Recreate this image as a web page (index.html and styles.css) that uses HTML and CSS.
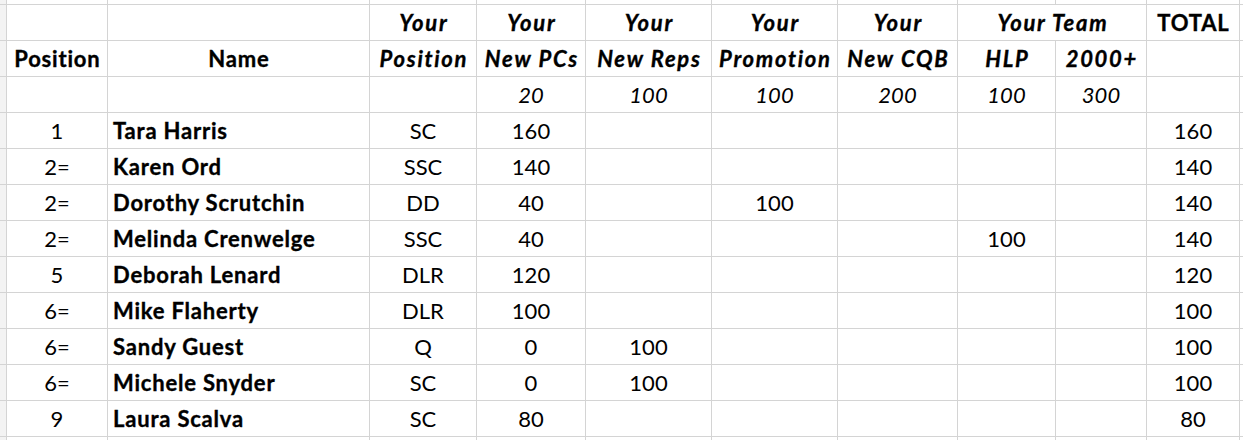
FILE: index.html
```html
<!DOCTYPE html>
<html>
<head>
<meta charset="utf-8">
<link rel="stylesheet" href="styles.css">
</head>
<body>
<div class="sheet">
  <!-- top partial row -->
  <div class="c e"></div><div class="c"></div><div class="c"></div><div class="c"></div><div class="c"></div><div class="c"></div><div class="c"></div><div class="c"></div><div class="c"></div><div class="c"></div><div class="c"></div><div class="c"></div>
  <!-- header row 1 -->
  <div class="c e"></div><div class="c"></div><div class="c"></div>
  <div class="c bi">Your</div><div class="c bi">Your</div><div class="c bi">Your</div><div class="c bi">Your</div><div class="c bi">Your</div>
  <div class="c bi span2">Your Team</div>
  <div class="c b">TOTAL</div><div class="c"></div>
  <!-- header row 2 -->
  <div class="c e"></div><div class="c b">Position</div><div class="c b">Name</div>
  <div class="c bi">Position</div><div class="c bi">New PCs</div><div class="c bi">New Reps</div><div class="c bi">Promotion</div><div class="c bi">New CQB</div><div class="c bi">HLP</div><div class="c bi">2000+</div>
  <div class="c"></div><div class="c"></div>
  <!-- header row 3 -->
  <div class="c e"></div><div class="c"></div><div class="c"></div><div class="c"></div>
  <div class="c it">20</div><div class="c it">100</div><div class="c it">100</div><div class="c it">200</div><div class="c it">100</div><div class="c it">300</div>
  <div class="c"></div><div class="c"></div>
  <!-- data -->
  <div class="c e"></div><div class="c">1</div><div class="c b l">Tara Harris</div><div class="c">SC</div><div class="c">160</div><div class="c"></div><div class="c"></div><div class="c"></div><div class="c"></div><div class="c"></div><div class="c">160</div><div class="c"></div>
  <div class="c e"></div><div class="c">2=</div><div class="c b l">Karen Ord</div><div class="c">SSC</div><div class="c">140</div><div class="c"></div><div class="c"></div><div class="c"></div><div class="c"></div><div class="c"></div><div class="c">140</div><div class="c"></div>
  <div class="c e"></div><div class="c">2=</div><div class="c b l">Dorothy Scrutchin</div><div class="c">DD</div><div class="c">40</div><div class="c"></div><div class="c">100</div><div class="c"></div><div class="c"></div><div class="c"></div><div class="c">140</div><div class="c"></div>
  <div class="c e"></div><div class="c">2=</div><div class="c b l">Melinda Crenwelge</div><div class="c">SSC</div><div class="c">40</div><div class="c"></div><div class="c"></div><div class="c"></div><div class="c">100</div><div class="c"></div><div class="c">140</div><div class="c"></div>
  <div class="c e"></div><div class="c">5</div><div class="c b l">Deborah Lenard</div><div class="c">DLR</div><div class="c">120</div><div class="c"></div><div class="c"></div><div class="c"></div><div class="c"></div><div class="c"></div><div class="c">120</div><div class="c"></div>
  <div class="c e"></div><div class="c">6=</div><div class="c b l">Mike Flaherty</div><div class="c">DLR</div><div class="c">100</div><div class="c"></div><div class="c"></div><div class="c"></div><div class="c"></div><div class="c"></div><div class="c">100</div><div class="c"></div>
  <div class="c e"></div><div class="c">6=</div><div class="c b l">Sandy Guest</div><div class="c">Q</div><div class="c">0</div><div class="c">100</div><div class="c"></div><div class="c"></div><div class="c"></div><div class="c"></div><div class="c">100</div><div class="c"></div>
  <div class="c e"></div><div class="c">6=</div><div class="c b l">Michele Snyder</div><div class="c">SC</div><div class="c">0</div><div class="c">100</div><div class="c"></div><div class="c"></div><div class="c"></div><div class="c"></div><div class="c">100</div><div class="c"></div>
  <div class="c e"></div><div class="c">9</div><div class="c b l">Laura Scalva</div><div class="c">SC</div><div class="c">80</div><div class="c"></div><div class="c"></div><div class="c"></div><div class="c"></div><div class="c"></div><div class="c">80</div><div class="c"></div>
  <!-- bottom partial row -->
  <div class="c e"></div><div class="c"></div><div class="c"></div><div class="c"></div><div class="c"></div><div class="c"></div><div class="c"></div><div class="c"></div><div class="c"></div><div class="c"></div><div class="c"></div><div class="c"></div>
</div>
</body>
</html>
```
FILE: styles.css
```css
html, body {
  margin: 0;
  padding: 0;
  background: #fff;
}
.sheet {
  width: 1243px;
  height: 440px;
  display: grid;
  grid-template-columns: 6px 100px 261px 106px 108px 125px 125px 119px 97px 90px 92px 1fr;
  grid-template-rows: 4px repeat(12, 35px) 1fr;
  gap: 1px;
  background: #d4d4d4;
  overflow: hidden;
  font-family: Lato, "Liberation Sans", sans-serif;
  font-size: 22px;
  color: #000;
}
.c {
  background: #fff;
  display: flex;
  align-items: center;
  justify-content: center;
  white-space: nowrap;
  overflow: hidden;
}
.e {
  background: #f3f3f3;
}
.b {
  font-weight: 700;
  letter-spacing: 0.8px;
  padding-left: 0.8px;
  -webkit-text-stroke: 0.35px #000;
}
.bi {
  font-weight: 700;
  font-style: italic;
  letter-spacing: 1.7px;
  padding-left: 1.7px;
  -webkit-text-stroke: 0.35px #000;
}
.it { font-style: italic; }
.l { justify-content: flex-start; padding-left: 5px; }
.span2 { grid-column: span 2; }
```
